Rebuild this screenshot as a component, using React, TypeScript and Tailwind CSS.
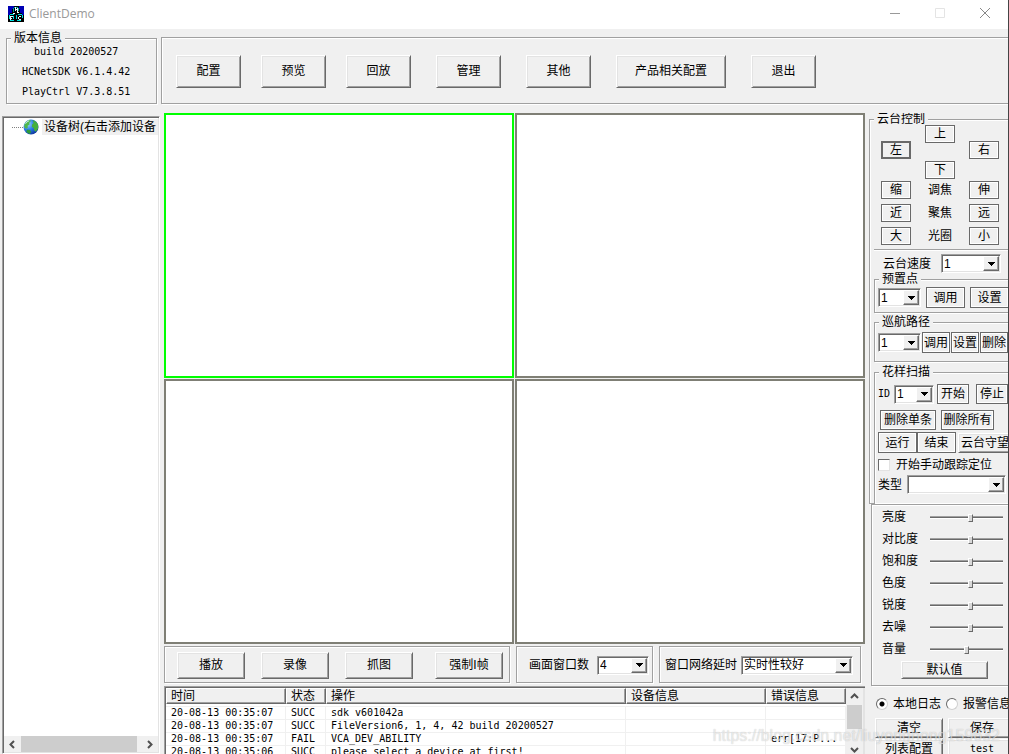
import React, { useId, useState } from 'react';

type LogEntry = {
  time: string;
  status: string;
  operation: string;
  device: string;
  error: string;
};

const LOGS: LogEntry[] = [
  { time: '20-08-13 00:35:07', status: 'SUCC', operation: 'sdk v601042a', device: '', error: '' },
  { time: '20-08-13 00:35:07', status: 'SUCC', operation: 'FileVersion6, 1, 4, 42 build 20200527', device: '', error: '' },
  { time: '20-08-13 00:35:07', status: 'FAIL', operation: 'VCA_DEV_ABILITY', device: '', error: 'err[17:P...' },
  { time: '20-08-13 00:35:06', status: 'SUCC', operation: 'please select a device at first!', device: '', error: '' },
];

const VIDEO_SLIDERS = [
  { label: '亮度', value: 56 },
  { label: '对比度', value: 56 },
  { label: '饱和度', value: 56 },
  { label: '色度', value: 56 },
  { label: '锐度', value: 56 },
  { label: '去噪', value: 56 },
  { label: '音量', value: 50 },
];

const LENS_ROWS = [
  { left: '缩', label: '调焦', right: '伸' },
  { left: '近', label: '聚焦', right: '远' },
  { left: '大', label: '光圈', right: '小' },
];

const MONO = "font-['DejaVu_Sans_Mono','Noto_Sans_CJK_SC',monospace] text-[10px]";

type ButtonProps = {
  className?: string;
  children: React.ReactNode;
};

// Classic raised push button
const RaisedButton: React.FC<ButtonProps> = ({ className = '', children }) => (
  <button
    type="button"
    className={`shrink-0 whitespace-nowrap border border-t-white border-l-white border-r-[#696969] border-b-[#696969] bg-[#f0f0f0] text-center shadow-[inset_1px_1px_0_#e3e3e3,inset_-1px_-1px_0_#a0a0a0] ${className}`}
  >
    {children}
  </button>
);

// Thin framed button used inside the PTZ panel
const FlatButton: React.FC<ButtonProps> = ({ className = '', children }) => (
  <button
    type="button"
    className={`shrink-0 whitespace-nowrap border border-[#696969] bg-[#f0f0f0] text-center shadow-[inset_1px_1px_0_#fff,inset_-1px_-1px_0_#fff] ${className}`}
  >
    {children}
  </button>
);

type SelectProps = {
  label: string;
  id?: string;
  options: string[];
  className?: string;
};

const WinSelect: React.FC<SelectProps> = ({ label, id, options, className = '' }) => (
  <span
    className={`relative inline-block h-[19px] shrink-0 border border-t-[#a0a0a0] border-l-[#a0a0a0] border-r-white border-b-white bg-white shadow-[inset_1px_1px_0_#696969,inset_-1px_-1px_0_#e3e3e3] ${className}`}
  >
    <select
      id={id}
      aria-label={label}
      className="block h-full w-full appearance-none bg-transparent pl-[2px] leading-4 outline-none"
    >
      {options.map((option) => (
        <option key={option}>{option}</option>
      ))}
    </select>
    <span className="pointer-events-none absolute top-px right-px bottom-px flex w-4 items-center justify-center border border-t-white border-l-white border-r-[#696969] border-b-[#696969] bg-[#f0f0f0] shadow-[inset_-1px_-1px_0_#a0a0a0]">
      <svg width="7" height="4" viewBox="0 0 7 4" shapeRendering="crispEdges">
        <path d="M0 0h7v1H0zM1 1h5v1H1zM2 2h3v1H2zM3 3h1v1H3z" fill="#000" />
      </svg>
    </span>
  </span>
);

type GroupProps = {
  title: string;
  className?: string;
  bodyClassName?: string;
  children: React.ReactNode;
};

const GroupBox: React.FC<GroupProps> = ({ title, className = '', bodyClassName = '', children }) => (
  <fieldset
    className={`min-w-0 border border-[#a0a0a0] shadow-[1px_1px_0_#fff,inset_1px_1px_0_#fff] ${className}`}
  >
    <legend className="ml-1 h-3 bg-[#f0f0f0] px-[3px] leading-3">{title}</legend>
    <div className={bodyClassName}>{children}</div>
  </fieldset>
);

const Panel: React.FC<ButtonProps> = ({ className = '', children }) => (
  <div className={`border border-[#a0a0a0] shadow-[1px_1px_0_#fff,inset_1px_1px_0_#fff] ${className}`}>
    {children}
  </div>
);

type ArrowProps = {
  direction: 'up' | 'down' | 'left' | 'right';
};

const ARROW_PATHS = {
  up: 'M1 6l3.5-3.5L8 6',
  down: 'M1 3l3.5 3.5L8 3',
  left: 'M6 1L2.5 4.5 6 8',
  right: 'M3 1l3.5 3.5L3 8',
};

const ScrollArrow: React.FC<ArrowProps> = ({ direction }) => (
  <svg width="9" height="9" viewBox="0 0 9 9" fill="none" stroke="#505050" strokeWidth="2">
    <path d={ARROW_PATHS[direction]} />
  </svg>
);

const AppIcon: React.FC = () => (
  <svg width="16" height="16" viewBox="0 0 16 16" shapeRendering="crispEdges">
    <path d="M0 0h16v16H0z" fill="#000" />
    <path d="M0 0h6v3H4v4H2v2H0zM11 0h5v9h-2V7h-2V3h-1z" fill="#0000b4" />
    <path d="M6 1h4v1H6zM5 2h1v4H5zM10 2h1v3h-1z" fill="#00a0a0" />
    <path d="M7 1h1v4H7zM9 2h1v4H9zM8 3h1v1H8z" fill="#e8ffff" />
    <path d="M2 8h4v1H2zM1 9h1v4H1zM5 10h1v3H5zM2 14h4v1H2z" fill="#00e0e0" />
    <path d="M2 10h1v4H2zM3 10h2v1H3zM3 12h1v1H3z" fill="#e8ffff" />
    <path d="M10 8h4v1h-4zM8 9h1v4H8zM9 14h4v1H9zM14 9h1v3h-1z" fill="#00e0e0" />
    <path d="M11 10h2v1h-2zM10 11h1v2h-1zM11 13h2v1h-2z" fill="#e8ffff" />
    <path d="M5 7h2v1H5zM9 6h2v1H9z" fill="#fff" />
  </svg>
);

const GlobeIcon: React.FC = () => (
  <svg width="16" height="16" viewBox="0 0 16 16" className="shrink-0">
    <defs>
      <radialGradient id="ocean" cx="0.3" cy="0.3" r="0.8">
        <stop offset="0" stopColor="#9fd8fb" />
        <stop offset="0.5" stopColor="#2a7ce6" />
        <stop offset="1" stopColor="#0c2f96" />
      </radialGradient>
    </defs>
    <circle cx="8" cy="8" r="7.5" fill="url(#ocean)" />
    <path d="M1.500 5.500c1-2.600 3-4.400 5.800-4.800L7.800 2.200 6.200 3.800l.4 1.600-2 1.400.2 2-1.800 1L1.200 8z" fill="#4fb84a" />
    <path d="M9.400 1.200c2.800.5 4.800 2.200 5.800 4.800l-.2 3.800-2.200 3-1.600-1.200-.4-2.400-2-1.400.4-2.600 1.600-1.200z" fill="#45b03c" />
    <path d="M4.200 10.400l2.800.6 1.200 1.800-1.400 2.200c-1.600-.4-2.800-1.200-3.600-2.400z" fill="#2f9a3a" />
    <path d="M2.600 4.600c1-1.600 2.200-2.400 3.600-2.800" stroke="#e4f6ff" strokeWidth="1" fill="none" />
  </svg>
);

const TitleBar: React.FC = () => (
  <header className="flex h-[29px] shrink-0 items-start bg-white pl-2">
    <div className="flex flex-1 items-center gap-[5px] pt-[5px]">
      <AppIcon />
      <h1 className="pt-px font-['Open_Sans','Noto_Sans',sans-serif] text-[12px] leading-4 text-[#999]">ClientDemo</h1>
    </div>
    <div className="flex">
      <button type="button" aria-label="最小化" className="flex h-[26px] w-[45px] items-center justify-center">
        <svg width="10" height="10" viewBox="0 0 10 10" stroke="#999" shapeRendering="crispEdges">
          <path d="M0 5.500h10" />
        </svg>
      </button>
      <button type="button" aria-label="最大化" disabled className="flex h-[26px] w-[45px] items-center justify-center">
        <svg width="10" height="10" viewBox="0 0 10 10" fill="none" stroke="#e4e4e4">
          <path d="M0.500 0.500h9v9h-9z" />
        </svg>
      </button>
      <button type="button" aria-label="关闭" className="flex h-[26px] w-[46px] items-center justify-center">
        <svg width="10" height="10" viewBox="0 0 10 10" stroke="#888">
          <path d="M0 0l10 10M10 0L0 10" />
        </svg>
      </button>
    </div>
  </header>
);

const Toolbar: React.FC = () => (
  <div className="flex h-[84px] shrink-0 items-start gap-1 pl-[6px]">
    <GroupBox
      title="版本信息"
      className="mt-[3px] h-[72px] w-[151px] shrink-0"
      bodyClassName={`flex flex-col gap-1 pl-[15px] ${MONO}`}
    >
      <p className="pl-3 leading-4">build 20200527</p>
      <p className="leading-4">HCNetSDK V6.1.4.42</p>
      <p className="leading-4">PlayCtrl V7.3.8.51</p>
    </GroupBox>
    <Panel className="mt-2 flex h-[67px] min-w-0 flex-1 items-center gap-[25px] border-r-0 pt-px pl-[14px]">
      <div className="flex gap-5">
        <RaisedButton className="h-[33px] w-[65px]">配置</RaisedButton>
        <RaisedButton className="h-[33px] w-[65px]">预览</RaisedButton>
        <RaisedButton className="h-[33px] w-[65px]">回放</RaisedButton>
      </div>
      <div className="flex gap-[25px]">
        <RaisedButton className="h-[33px] w-[65px]">管理</RaisedButton>
        <RaisedButton className="h-[33px] w-[65px]">其他</RaisedButton>
        <RaisedButton className="h-[33px] w-[110px]">产品相关配置</RaisedButton>
      </div>
      <RaisedButton className="h-[33px] w-[65px]">退出</RaisedButton>
    </Panel>
  </div>
);

const DeviceTree: React.FC = () => (
  <aside className="mt-[3px] ml-[2px] flex w-[158px] shrink-0 flex-col border border-t-[#a0a0a0] border-l-[#a0a0a0] border-r-white border-b-white bg-white shadow-[inset_1px_1px_0_#696969,inset_-1px_-1px_0_#e3e3e3]">
    <ul className="min-h-0 flex-1 overflow-hidden pt-[2px] pl-[9px]">
      <li className="flex items-center">
        <span className="w-[11px] shrink-0 border-t border-dotted border-[#808080]" />
        <GlobeIcon />
        <span className="ml-[3px] bg-[#f0f0f0] px-[2px] leading-4 whitespace-nowrap">设备树(右击添加设备</span>
      </li>
    </ul>
    <div className="m-px flex h-4 items-center bg-[#f0f0f0]">
      <span className="flex w-[17px] justify-center">
        <ScrollArrow direction="left" />
      </span>
      <span className="h-4 w-[116px] bg-[#cdcdcd]" />
      <span className="flex flex-1 justify-end pr-1">
        <ScrollArrow direction="right" />
      </span>
    </div>
  </aside>
);

const VideoGrid: React.FC = () => {
  const [active, setActive] = useState(0);

  return (
    <div className="grid min-h-0 flex-1 grid-cols-2 grid-rows-2 gap-px">
      {[0, 1, 2, 3].map((index) => (
        <div
          key={index}
          onClick={() => setActive(index)}
          className={`border-2 bg-white ${active === index ? 'border-[#00ff00]' : 'border-[#7f7f75]'}`}
        />
      ))}
    </div>
  );
};

const PlaybackBar: React.FC = () => (
  <div className="mt-[2px] flex h-[37px] shrink-0 gap-[6px] pr-1">
    <Panel className="flex w-[346px] shrink-0 items-center gap-[22px] pt-px pl-3">
      <div className="flex gap-4">
        <RaisedButton className="h-[27px] w-[68px]">播放</RaisedButton>
        <RaisedButton className="h-[27px] w-[68px]">录像</RaisedButton>
        <RaisedButton className="h-[27px] w-[68px]">抓图</RaisedButton>
      </div>
      <RaisedButton className="h-[27px] w-[68px]">强制I帧</RaisedButton>
    </Panel>
    <Panel className="flex w-[137px] shrink-0 items-center gap-2 pt-px pl-3">
      <label htmlFor="window-count">画面窗口数</label>
      <WinSelect id="window-count" label="画面窗口数" options={['4', '1', '9', '16']} className="w-[52px]" />
    </Panel>
    <Panel className="flex min-w-0 flex-1 items-center gap-1 px-[5px] pt-px">
      <label htmlFor="net-delay" className="shrink-0">窗口网络延时</label>
      <WinSelect id="net-delay" label="窗口网络延时" options={['实时性较好', '流畅性较好']} className="w-[112px]" />
    </Panel>
  </div>
);

const HEADER_CELL =
  'h-4 overflow-hidden border border-t-white border-l-white border-r-[#696969] border-b-[#696969] bg-[#f0f0f0] pl-1 text-left font-normal leading-[14px] whitespace-nowrap shadow-[inset_-1px_-1px_0_#a0a0a0]';
const BODY_CELL = 'h-[13px] overflow-hidden border-r border-b border-[#f0f0f0] pl-[5px] leading-3 whitespace-nowrap';

const LogTable: React.FC = () => (
  <div className="mt-[3px] flex h-[68px] shrink-0 overflow-hidden border-t border-l border-[#a0a0a0] bg-white pt-px pl-px shadow-[inset_1px_1px_0_#696969]">
    <div className="min-w-0 flex-1 overflow-hidden">
      <table className="w-full table-fixed border-separate border-spacing-0">
        <colgroup>
          <col className="w-[120px]" />
          <col className="w-10" />
          <col />
          <col className="w-[140px]" />
          <col className="w-20" />
        </colgroup>
        <thead>
          <tr>
            <th className={HEADER_CELL}>时间</th>
            <th className={HEADER_CELL}>状态</th>
            <th className={HEADER_CELL}>操作</th>
            <th className={HEADER_CELL}>设备信息</th>
            <th className={HEADER_CELL}>错误信息</th>
          </tr>
        </thead>
        <tbody className={MONO}>
          <tr aria-hidden="true">
            <td colSpan={5} className="h-[3px] border-b border-[#f0f0f0]" />
          </tr>
          {LOGS.map((log, index) => (
            <tr key={index}>
              <td className={BODY_CELL}>{log.time}</td>
              <td className={BODY_CELL}>{log.status}</td>
              <td className={BODY_CELL}>{log.operation}</td>
              <td className={BODY_CELL}>{log.device}</td>
              <td className={BODY_CELL}>{log.error}</td>
            </tr>
          ))}
        </tbody>
      </table>
    </div>
    <div className="flex w-[19px] shrink-0 flex-col items-center border-r-2 border-[#e3e3e3] bg-[#f0f0f0]">
      <span className="flex h-[17px] items-center">
        <ScrollArrow direction="up" />
      </span>
      <span className="h-6 w-[15px] bg-[#cdcdcd]" />
      <span className="flex flex-1 items-end">
        <ScrollArrow direction="down" />
      </span>
    </div>
  </div>
);

const PtzPanel: React.FC = () => (
  <GroupBox title="云台控制" className="shrink-0 border-r-0" bodyClassName="pl-1">
    <div className="pl-[7px]">
      <div className="flex items-start gap-[14px]">
        <div className="pt-4">
          <FlatButton className="h-[18px] w-[30px] outline outline-[#696969] -outline-offset-2">左</FlatButton>
        </div>
        <div className="flex flex-col gap-[18px]">
          <FlatButton className="h-[18px] w-[30px]">上</FlatButton>
          <FlatButton className="h-[18px] w-[30px]">下</FlatButton>
        </div>
        <div className="pt-4">
          <FlatButton className="h-[18px] w-[30px]">右</FlatButton>
        </div>
      </div>
      <div className="mt-[2px] flex flex-col gap-[5px]">
        {LENS_ROWS.map((row) => (
          <div key={row.label} className="flex items-center gap-[14px]">
            <FlatButton className="h-[18px] w-[30px]">{row.left}</FlatButton>
            <span className="w-[30px] text-center">{row.label}</span>
            <FlatButton className="h-[18px] w-[30px]">{row.right}</FlatButton>
          </div>
        ))}
      </div>
    </div>
    <div className="mt-1 border-t border-[#a0a0a0] shadow-[0_1px_0_#fff]" />
    <div className="mt-1 flex items-center gap-[10px] pl-[9px]">
      <label htmlFor="ptz-speed">云台速度</label>
      <WinSelect id="ptz-speed" label="云台速度" options={['1', '2', '3', '4']} className="w-[60px]" />
    </div>

    <GroupBox title="预置点" className="h-[40px] border-r-0" bodyClassName="flex items-center gap-[5px] pt-[2px] pl-[3px]">
      <WinSelect label="预置点" options={['1', '2', '3']} className="w-[43px]" />
      <FlatButton className="h-[21px] w-[39px]">调用</FlatButton>
      <FlatButton className="h-[21px] w-[39px]">设置</FlatButton>
    </GroupBox>

    <GroupBox
      title="巡航路径"
      className="mt-[3px] h-[46px] border-r-0"
      bodyClassName="flex items-center gap-px pt-1 pl-[3px]"
    >
      <WinSelect label="巡航路径" options={['1', '2', '3']} className="w-[43px]" />
      <FlatButton className="h-[21px] w-[28px]">调用</FlatButton>
      <FlatButton className="h-[21px] w-[28px]">设置</FlatButton>
      <FlatButton className="h-[21px] w-[28px]">删除</FlatButton>
    </GroupBox>

    <GroupBox title="花样扫描" className="mt-1 border-r-0 border-b-0" bodyClassName="pb-[9px] pl-[3px]">
      <div className="flex items-center pt-[6px]">
        <label htmlFor="scan-id" className={`w-[17px] ${MONO}`}>ID</label>
        <WinSelect id="scan-id" label="ID" options={['1', '2', '3']} className="w-10" />
        <FlatButton className="ml-[3px] h-5 w-8">开始</FlatButton>
        <FlatButton className="ml-[7px] h-5 w-8">停止</FlatButton>
      </div>
      <div className="mt-[6px] flex gap-[5px] pl-[2px]">
        <FlatButton className="h-5 w-14">删除单条</FlatButton>
        <FlatButton className="h-5 w-[53px]">删除所有</FlatButton>
      </div>
      <div className="mt-[2px] flex items-end">
        <FlatButton className="h-[21px] w-[39px]">运行</FlatButton>
        <FlatButton className="h-[21px] w-[39px]">结束</FlatButton>
        <RaisedButton className="ml-[2px] h-5 w-[54px]">云台守望</RaisedButton>
      </div>
      <div className="mt-1 flex h-4 items-center gap-[6px]">
        <input
          id="manual-track"
          type="checkbox"
          className="h-3 w-3 shrink-0 appearance-none border border-t-[#696969] border-l-[#696969] border-r-[#e3e3e3] border-b-[#e3e3e3] bg-white checked:bg-gray-600"
        />
        <label htmlFor="manual-track" className="whitespace-nowrap">开始手动跟踪定位</label>
      </div>
      <div className="mt-[2px] flex items-center gap-[5px]">
        <label htmlFor="track-type" className="shrink-0">类型</label>
        <WinSelect id="track-type" label="类型" options={['']} className="w-[99px]" />
      </div>
    </GroupBox>
  </GroupBox>
);

type SliderProps = {
  label: string;
  value: number;
};

const SliderRow: React.FC<SliderProps> = ({ label, value }) => {
  const id = useId();

  return (
    <div className="flex h-[22px] items-center">
      <label htmlFor={id} className="w-12 shrink-0">{label}</label>
      <input
        id={id}
        type="range"
        defaultValue={value}
        className="h-[2px] w-[73px] shrink-0 appearance-none border-t border-[#a0a0a0] bg-[#696969] shadow-[0_1px_0_#fff] [&::-webkit-slider-thumb]:h-2 [&::-webkit-slider-thumb]:w-[5px] [&::-webkit-slider-thumb]:appearance-none [&::-webkit-slider-thumb]:border [&::-webkit-slider-thumb]:border-t-white [&::-webkit-slider-thumb]:border-r-[#696969] [&::-webkit-slider-thumb]:border-b-[#696969] [&::-webkit-slider-thumb]:border-l-white [&::-webkit-slider-thumb]:bg-[#d8d8d8]"
      />
    </div>
  );
};

const RADIO_CLASS =
  'h-3 w-3 shrink-0 appearance-none rounded-full border border-t-[#696969] border-l-[#696969] border-r-[#d0d0d0] border-b-[#d0d0d0] bg-white checked:bg-[radial-gradient(circle,#000_2px,#fff_3px)]';

const SidePanel: React.FC = () => (
  <aside className="ml-1 flex w-[139px] shrink-0 flex-col overflow-hidden">
    <PtzPanel />
    <Panel className="ml-[2px] h-[182px] shrink-0 border-r-0 pt-px pl-[10px]">
      {VIDEO_SLIDERS.map((slider) => (
        <SliderRow key={slider.label} label={slider.label} value={slider.value} />
      ))}
      <RaisedButton className="mt-px ml-[19px] h-[18px] w-[87px] leading-4">默认值</RaisedButton>
    </Panel>
    <div className="mt-[10px] flex h-4 shrink-0 items-center gap-[5px] pl-[7px] whitespace-nowrap">
      <input id="log-local" type="radio" name="log" defaultChecked className={RADIO_CLASS} />
      <label htmlFor="log-local" className="shrink-0">本地日志</label>
      <input id="log-alarm" type="radio" name="log" className={RADIO_CLASS} />
      <label htmlFor="log-alarm" className="shrink-0">报警信息</label>
    </div>
    <div className="mt-[6px] flex shrink-0 flex-col gap-px pl-[6px]">
      <div className="flex gap-[5px]">
        <RaisedButton className="h-5 w-[68px]">清空</RaisedButton>
        <RaisedButton className="h-5 w-[68px]">保存</RaisedButton>
      </div>
      <div className="flex gap-[5px]">
        <RaisedButton className="h-5 w-[68px]">列表配置</RaisedButton>
        <RaisedButton className={`h-5 w-[68px] ${MONO}`}>test</RaisedButton>
      </div>
    </div>
  </aside>
);

const App: React.FC = () => {
  return (
    <div className="relative flex h-screen flex-col overflow-hidden border-r border-[#444] bg-[#f0f0f0] font-['Liberation_Sans','Noto_Sans_CJK_SC',sans-serif] text-[12px] leading-4 text-black">
      <TitleBar />
      <Toolbar />
      <div className="flex min-h-0 flex-1">
        <DeviceTree />
        <main className="ml-1 flex min-w-0 flex-1 flex-col">
          <VideoGrid />
          <PlaybackBar />
          <LogTable />
        </main>
        <SidePanel />
      </div>
      <p className="pointer-events-none absolute right-2 bottom-2 font-['Liberation_Sans',sans-serif] text-[16px] leading-5 text-white/60 [text-shadow:0_0_1px_rgba(0,0,0,0.25)]">
        https://blog.csdn.net/liuyonghong159632
      </p>
    </div>
  );
};

export default App;
